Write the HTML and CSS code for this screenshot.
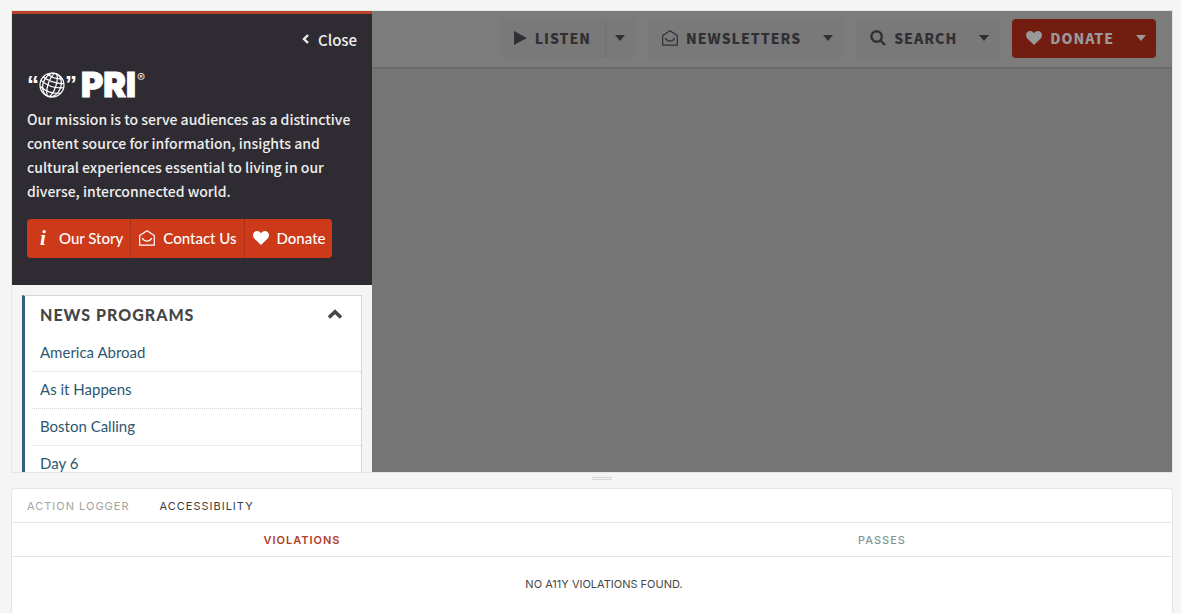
FILE: index.html
```html
<!DOCTYPE html>
<html lang="en">
<head>
    <meta charset="UTF-8">
    <meta name="viewport" content="width=device-width, initial-scale=1.0">
    <title>PRI Drawer</title>
    <link rel="stylesheet" href="styles.css">
</head>
<body>
    <!-- shared icons -->
    <svg class="sprite" aria-hidden="true">
        <symbol id="icon-envelope" viewBox="0 0 16 16">
            <path d="M.7 5.600 8 .7 15.300 5.600v9.600H.7zM3.200 8.200C5.800 12.200 10.200 12.200 12.800 8.200" fill="none" stroke="currentColor" stroke-width="1.200" stroke-linejoin="round"/>
        </symbol>
        <symbol id="icon-heart" viewBox="0 0 16 14">
            <path d="M8 14 1.300 7.400C-.4 5.600-.4 2.800 1.200 1.200 3-.5 6-.4 8 2.300 10-.4 13-.5 14.800 1.200c1.600 1.600 1.600 4.400-.1 6.200z" fill="currentColor"/>
        </symbol>
    </svg>

    <div class="preview">
        <aside class="drawer">
            <div class="drawer-top">
                <button class="close-btn">
                    <svg width="7" height="10" viewBox="0 0 7 10"><path d="M6 1 2 5l4 4" fill="none" stroke="currentColor" stroke-width="2.400"/></svg>
                    Close
                </button>
                <div class="logo">
                    <span class="logo-quote">“</span>
                    <svg class="logo-globe" width="26" height="26" viewBox="0 0 26 26" fill="none" stroke="#fff" stroke-width="1.200">
                        <circle cx="13" cy="13" r="12"/>
                        <g transform="rotate(18 13 13)">
                            <ellipse cx="13" cy="13" rx="4" ry="12"/>
                            <ellipse cx="13" cy="13" rx="9" ry="12"/>
                            <path d="M1 12Q13 17 25 12M2 8Q13 12 24 8M5 4Q13 7 21 4M2.500 18Q13 23 23.500 18"/>
                        </g>
                    </svg>
                    <span class="logo-quote">”</span>
                    <span class="logo-name">PRI</span>
                    <span class="logo-mark">®</span>
                </div>
                <p class="mission">Our mission is to serve audiences as a distinctive content source for information, insights and cultural experiences essential to living in our diverse, interconnected world.</p>
                <div class="cta-group">
                    <a href="#" class="cta"><span class="cta-info">i</span>Our Story</a>
                    <a href="#" class="cta"><svg width="16" height="16"><use href="#icon-envelope"/></svg>Contact Us</a>
                    <a href="#" class="cta"><svg width="16" height="14"><use href="#icon-heart"/></svg>Donate</a>
                </div>
            </div>
            <nav class="menu">
                <button class="menu-title">
                    NEWS PROGRAMS
                    <svg width="16" height="11" viewBox="0 0 16 11"><path d="M2 8.500 8 2.800l6 5.700" fill="none" stroke="currentColor" stroke-width="3.600"/></svg>
                </button>
                <ul class="menu-list">
                    <li><a href="#">America Abroad</a></li>
                    <li><a href="#">As it Happens</a></li>
                    <li><a href="#">Boston Calling</a></li>
                    <li><a href="#">Day 6</a></li>
                </ul>
            </nav>
        </aside>
        <main class="page">
            <header class="toolbar">
                <div class="tool tool-split">
                    <button class="tool-btn"><svg width="13" height="14" viewBox="0 0 13 14"><path d="M0 0 13 7 0 14z" fill="currentColor"/></svg>LISTEN</button>
                    <button class="tool-caret" aria-label="Listen options"></button>
                </div>
                <div class="tool">
                    <button class="tool-btn"><svg width="16" height="16"><use href="#icon-envelope"/></svg>NEWSLETTERS</button>
                    <button class="tool-caret" aria-label="Newsletter options"></button>
                </div>
                <div class="tool">
                    <button class="tool-btn"><svg width="16" height="16" viewBox="0 0 16 16"><path d="M10.500 10.500 15 15M11.800 6.500a5.200 5.200 0 1 1-10.400 0 5.200 5.200 0 0 1 10.400 0z" fill="none" stroke="currentColor" stroke-width="2.400"/></svg>SEARCH</button>
                    <button class="tool-caret" aria-label="Search options"></button>
                </div>
                <div class="tool tool-donate">
                    <button class="tool-btn"><svg width="16" height="14"><use href="#icon-heart"/></svg>DONATE</button>
                    <button class="tool-caret" aria-label="Donate options"></button>
                </div>
            </header>
        </main>
    </div>

    <div class="resizer"></div>

    <section class="panel">
        <div class="tabs">
            <button class="tab">ACTION LOGGER</button>
            <button class="tab tab-active">ACCESSIBILITY</button>
        </div>
        <div class="results">
            <button class="result result-active">VIOLATIONS</button>
            <button class="result">PASSES</button>
        </div>
        <p class="empty">NO A11Y VIOLATIONS FOUND.</p>
    </section>
</body>
</html>
```
FILE: styles.css
```css
* {
    margin: 0;
    padding: 0;
    box-sizing: border-box;
}
body {
    height: 100vh;
    padding: 10px 8px 0 11px;
    background: #f5f5f5;
    display: flex;
    flex-direction: column;
    overflow: hidden;
    font-family: Lato, sans-serif;
}
button {
    border: none;
    background: none;
    color: inherit;
    font: inherit;
    letter-spacing: inherit;
    cursor: pointer;
}
a {
    color: inherit;
    text-decoration: none;
}
svg {
    flex-shrink: 0;
}
.sprite {
    display: none;
}

/* preview */
.preview {
    flex: 1;
    min-height: 0;
    display: flex;
    border: 1px solid #e6e6e6;
    overflow: hidden;
}
.drawer {
    width: 360px;
    flex-shrink: 0;
    background: #f5f5f5;
}
.drawer-top {
    display: flex;
    flex-direction: column;
    align-items: flex-start;
    padding: 13px 15px 27px;
    border-top: 3px solid #b8432a;
    background: #2e2c32;
    color: #fff;
}
.close-btn {
    display: flex;
    align-items: center;
    align-self: flex-end;
    gap: 9px;
    height: 24px;
    font-family: "Noto Sans CJK JP", sans-serif;
    font-weight: 500;
    font-size: 15px;
    color: #eee;
}
.logo {
    display: flex;
    height: 26px;
    margin-top: 21px;
}
.logo-quote {
    font-family: "Liberation Sans", sans-serif;
    font-weight: 700;
    font-size: 24px;
    line-height: 26px;
}
.logo-name {
    margin-left: 4px;
    font-family: Inter, sans-serif;
    font-weight: 900;
    font-size: 34px;
    line-height: 26px;
    -webkit-text-stroke: 1px;
}
.logo-mark {
    margin-left: 1px;
    font-family: Inter, sans-serif;
    font-weight: 300;
    font-size: 12px;
    line-height: 12px;
}
.mission {
    margin-top: 9px;
    font-family: "Noto Sans CJK JP", sans-serif;
    font-weight: 500;
    font-size: 14px;
    line-height: 24px;
    color: #eee;
}
.cta-group {
    display: flex;
    height: 39px;
    margin-top: 16px;
    border-radius: 4px;
    background: #cd3a1a;
}
.cta {
    display: flex;
    align-items: center;
    gap: 8px;
    padding: 0 7px 1px 8px;
    font-weight: 500;
    font-size: 15px;
}
.cta + .cta {
    border-left: 1px dotted #8e2814;
}
.cta-info {
    width: 16px;
    text-align: center;
    font-family: "Liberation Serif", serif;
    font-style: italic;
    font-weight: 700;
    font-size: 21px;
}
.menu {
    margin: 10px 10px 0;
    border: 1px solid #d5d5d5;
    border-left: 3px solid #33627f;
    background: #fff;
}
.menu-title {
    display: flex;
    align-items: center;
    justify-content: space-between;
    width: 100%;
    height: 39px;
    padding: 0 18px 2px 15px;
    font-weight: 900;
    font-size: 16px;
    letter-spacing: 1px;
    color: #464646;
}
.menu-list {
    list-style: none;
}
.menu-list li {
    margin-left: 7px;
    border-bottom: 1px dotted #d0d8d8;
}
.menu-list a {
    display: block;
    padding: 0 8px 2px;
    font-size: 15px;
    line-height: 34px;
    color: #2c5871;
}

/* dimmed page behind the drawer */
.page {
    flex: 1;
    min-width: 0;
    background: #757575;
}
.toolbar {
    display: flex;
    justify-content: flex-end;
    gap: 13px;
    padding: 8px 16px 9px;
    border-bottom: 2px solid #6a6a6a;
    background: #7c7c7c;
}
.tool {
    display: flex;
    height: 39px;
    border-radius: 4px;
    background: #797979;
    color: #303034;
}
.tool-btn {
    display: flex;
    align-items: center;
    gap: 8px;
    padding: 0 0 2px 14px;
    font-family: "Noto Sans CJK JP", sans-serif;
    font-weight: 900;
    font-size: 14px;
    letter-spacing: 1px;
}
.tool-caret {
    display: flex;
    align-items: center;
    padding: 0 10px 2px 22px;
}
.tool-caret::before {
    content: "";
    border: 5px solid transparent;
    border-top: 6px solid currentColor;
    border-bottom: 0;
}
.tool-split .tool-caret {
    margin-left: 14px;
    padding-left: 9px;
    border-left: 1px solid #717171;
}
.tool-donate {
    background: #731d10;
    color: #999;
}

.resizer {
    width: 20px;
    height: 3px;
    margin: 4px 0 8px 50%;
    border: solid #d6d6d6;
    border-width: 1px 0;
}

/* addon panel */
.panel {
    height: 125px;
    flex-shrink: 0;
    border: 1px solid #e4e4e4;
    border-bottom: none;
    border-radius: 4px 4px 0 0;
    background: #fff;
    font-family: Inter, sans-serif;
    font-size: 11px;
    color: #464646;
}
.tabs,
.results {
    display: flex;
    height: 34px;
    border-bottom: 1px solid #e4e4e4;
    letter-spacing: 1px;
}
.tab {
    padding: 0 15px;
    color: #a3a3a3;
}
.tab-active {
    color: #3c3c3c;
}
.result {
    flex: 1;
    color: #819694;
    font-weight: 500;
}
.result-active {
    color: #b0402a;
    font-weight: 600;
}
.empty {
    padding: 20px 0 20px 24px;
    text-align: center;
    line-height: 14px;
}
```
